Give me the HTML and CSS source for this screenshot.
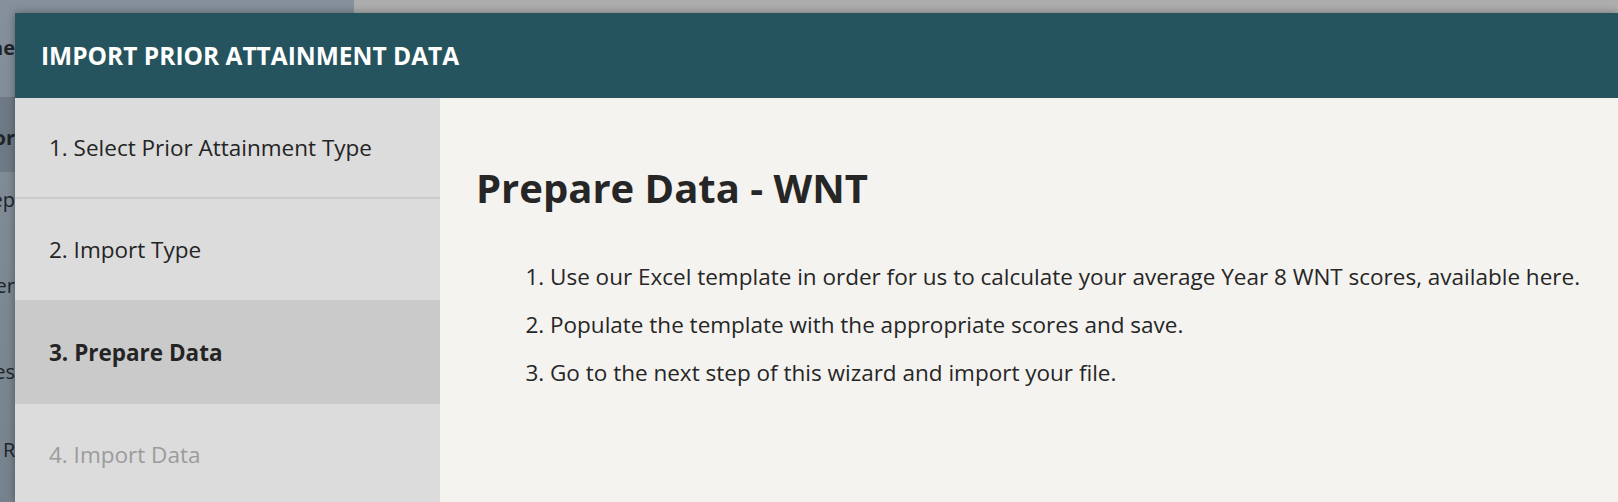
FILE: index.html
```html
<!DOCTYPE html>
<html lang="en">
<head>
    <meta charset="UTF-8">
    <meta name="viewport" content="width=device-width, initial-scale=1.0">
    <title>Import Prior Attainment Data</title>
    <link rel="stylesheet" href="styles.css">
</head>
<body>
    <div class="page">
        <nav class="page-nav">
            <div class="nav-item bold first"><span>he</span></div>
            <div class="nav-band">
                <div class="nav-item bold active"><span>or</span></div>
            </div>
            <div class="nav-item"><span>ep</span></div>
            <div class="nav-item"><span>er</span></div>
            <div class="nav-item"><span>es</span></div>
            <div class="nav-item last"><span>R</span></div>
        </nav>
        <div class="page-main"></div>
    </div>

    <div class="modal">
        <header class="modal-header">
            <h1>Import Prior Attainment Data</h1>
        </header>
        <div class="modal-body">
            <ul class="steps">
                <li class="step step-first">1. Select Prior Attainment Type</li>
                <li class="step">2. Import Type</li>
                <li class="step current">3. Prepare Data</li>
                <li class="step disabled">4. Import Data</li>
            </ul>
            <main class="content">
                <h2>Prepare Data - WNT</h2>
                <ol class="instructions">
                    <li>Use our Excel template in order for us to calculate your average Year 8 WNT scores, available here.</li>
                    <li>Populate the template with the appropriate scores and save.</li>
                    <li>Go to the next step of this wizard and import your file.</li>
                </ol>
            </main>
        </div>
    </div>
</body>
</html>
```

FILE: styles.css
```css
html, body {
    height: 100%;
}
body {
    font-family: "Open Sans", "Noto Sans", sans-serif;
    margin: 0;
    padding: 0;
    overflow: hidden;
    background-color: #adadad;
    color: #262626;
}

/* dimmed page behind the dialog */
.page {
    display: flex;
    height: 100%;
}
.page-nav {
    width: 354px;
    background: linear-gradient(to bottom, #85909a, #76828d);
}
.nav-item {
    width: 15px;
    height: 86px;
    overflow: hidden;
    display: flex;
    justify-content: flex-end;
    padding-top: 14px;
    box-sizing: border-box;
    font-size: 20px;
    line-height: 28px;
    color: #1e2428;
}
.nav-item span {
    white-space: nowrap;
}
.nav-item.bold {
    font-weight: bold;
}
.nav-item.first {
    height: 97px;
    padding-top: 34px;
}
.nav-band {
    height: 75px;
    background-color: #6d7a85;
}
.nav-item.active {
    height: 75px;
    padding-top: 27px;
}
.nav-item.last {
    margin-top: -8px;
    justify-content: flex-start;
    padding-left: 3px;
}
.page-main {
    flex: 1;
}

/* dialog */
.modal {
    position: absolute;
    top: 13px;
    left: 15px;
    right: 0;
    bottom: 0;
    display: flex;
    flex-direction: column;
    box-shadow: 0 0 8px rgba(0, 0, 0, 0.35);
}
.modal-header {
    height: 85px;
    flex-shrink: 0;
    background-color: #25545e;
    display: flex;
    align-items: center;
    padding-left: 26px;
}
.modal-header h1 {
    margin: 0;
    color: #fff;
    font-size: 24.5px;
    font-weight: bold;
    text-transform: uppercase;
}
.modal-body {
    flex: 1;
    display: flex;
}
.steps {
    list-style: none;
    margin: 0;
    padding: 0;
    width: 425px;
    flex-shrink: 0;
    background-color: #dcdcdc;
}
.step {
    height: 101px;
    display: flex;
    align-items: center;
    padding-left: 34px;
    font-size: 22.5px;
    color: #242424;
}
.step-first {
    height: 99px;
    border-bottom: 2px solid #cbcbcb;
}
.step.current {
    background-color: #cacaca;
    font-weight: bold;
    height: 104px;
}
.step.disabled {
    color: #9b9b9b;
}
.content {
    flex: 1;
    background-color: #f4f3f0;
    padding: 62px 36px 0;
}
.content h2 {
    margin: 0;
    font-size: 40px;
    font-weight: bold;
    color: #262626;
}
.instructions {
    margin: 38px 0 0;
    padding-left: 74px;
    font-size: 22.5px;
}
.instructions li {
    line-height: 48px;
}
```
